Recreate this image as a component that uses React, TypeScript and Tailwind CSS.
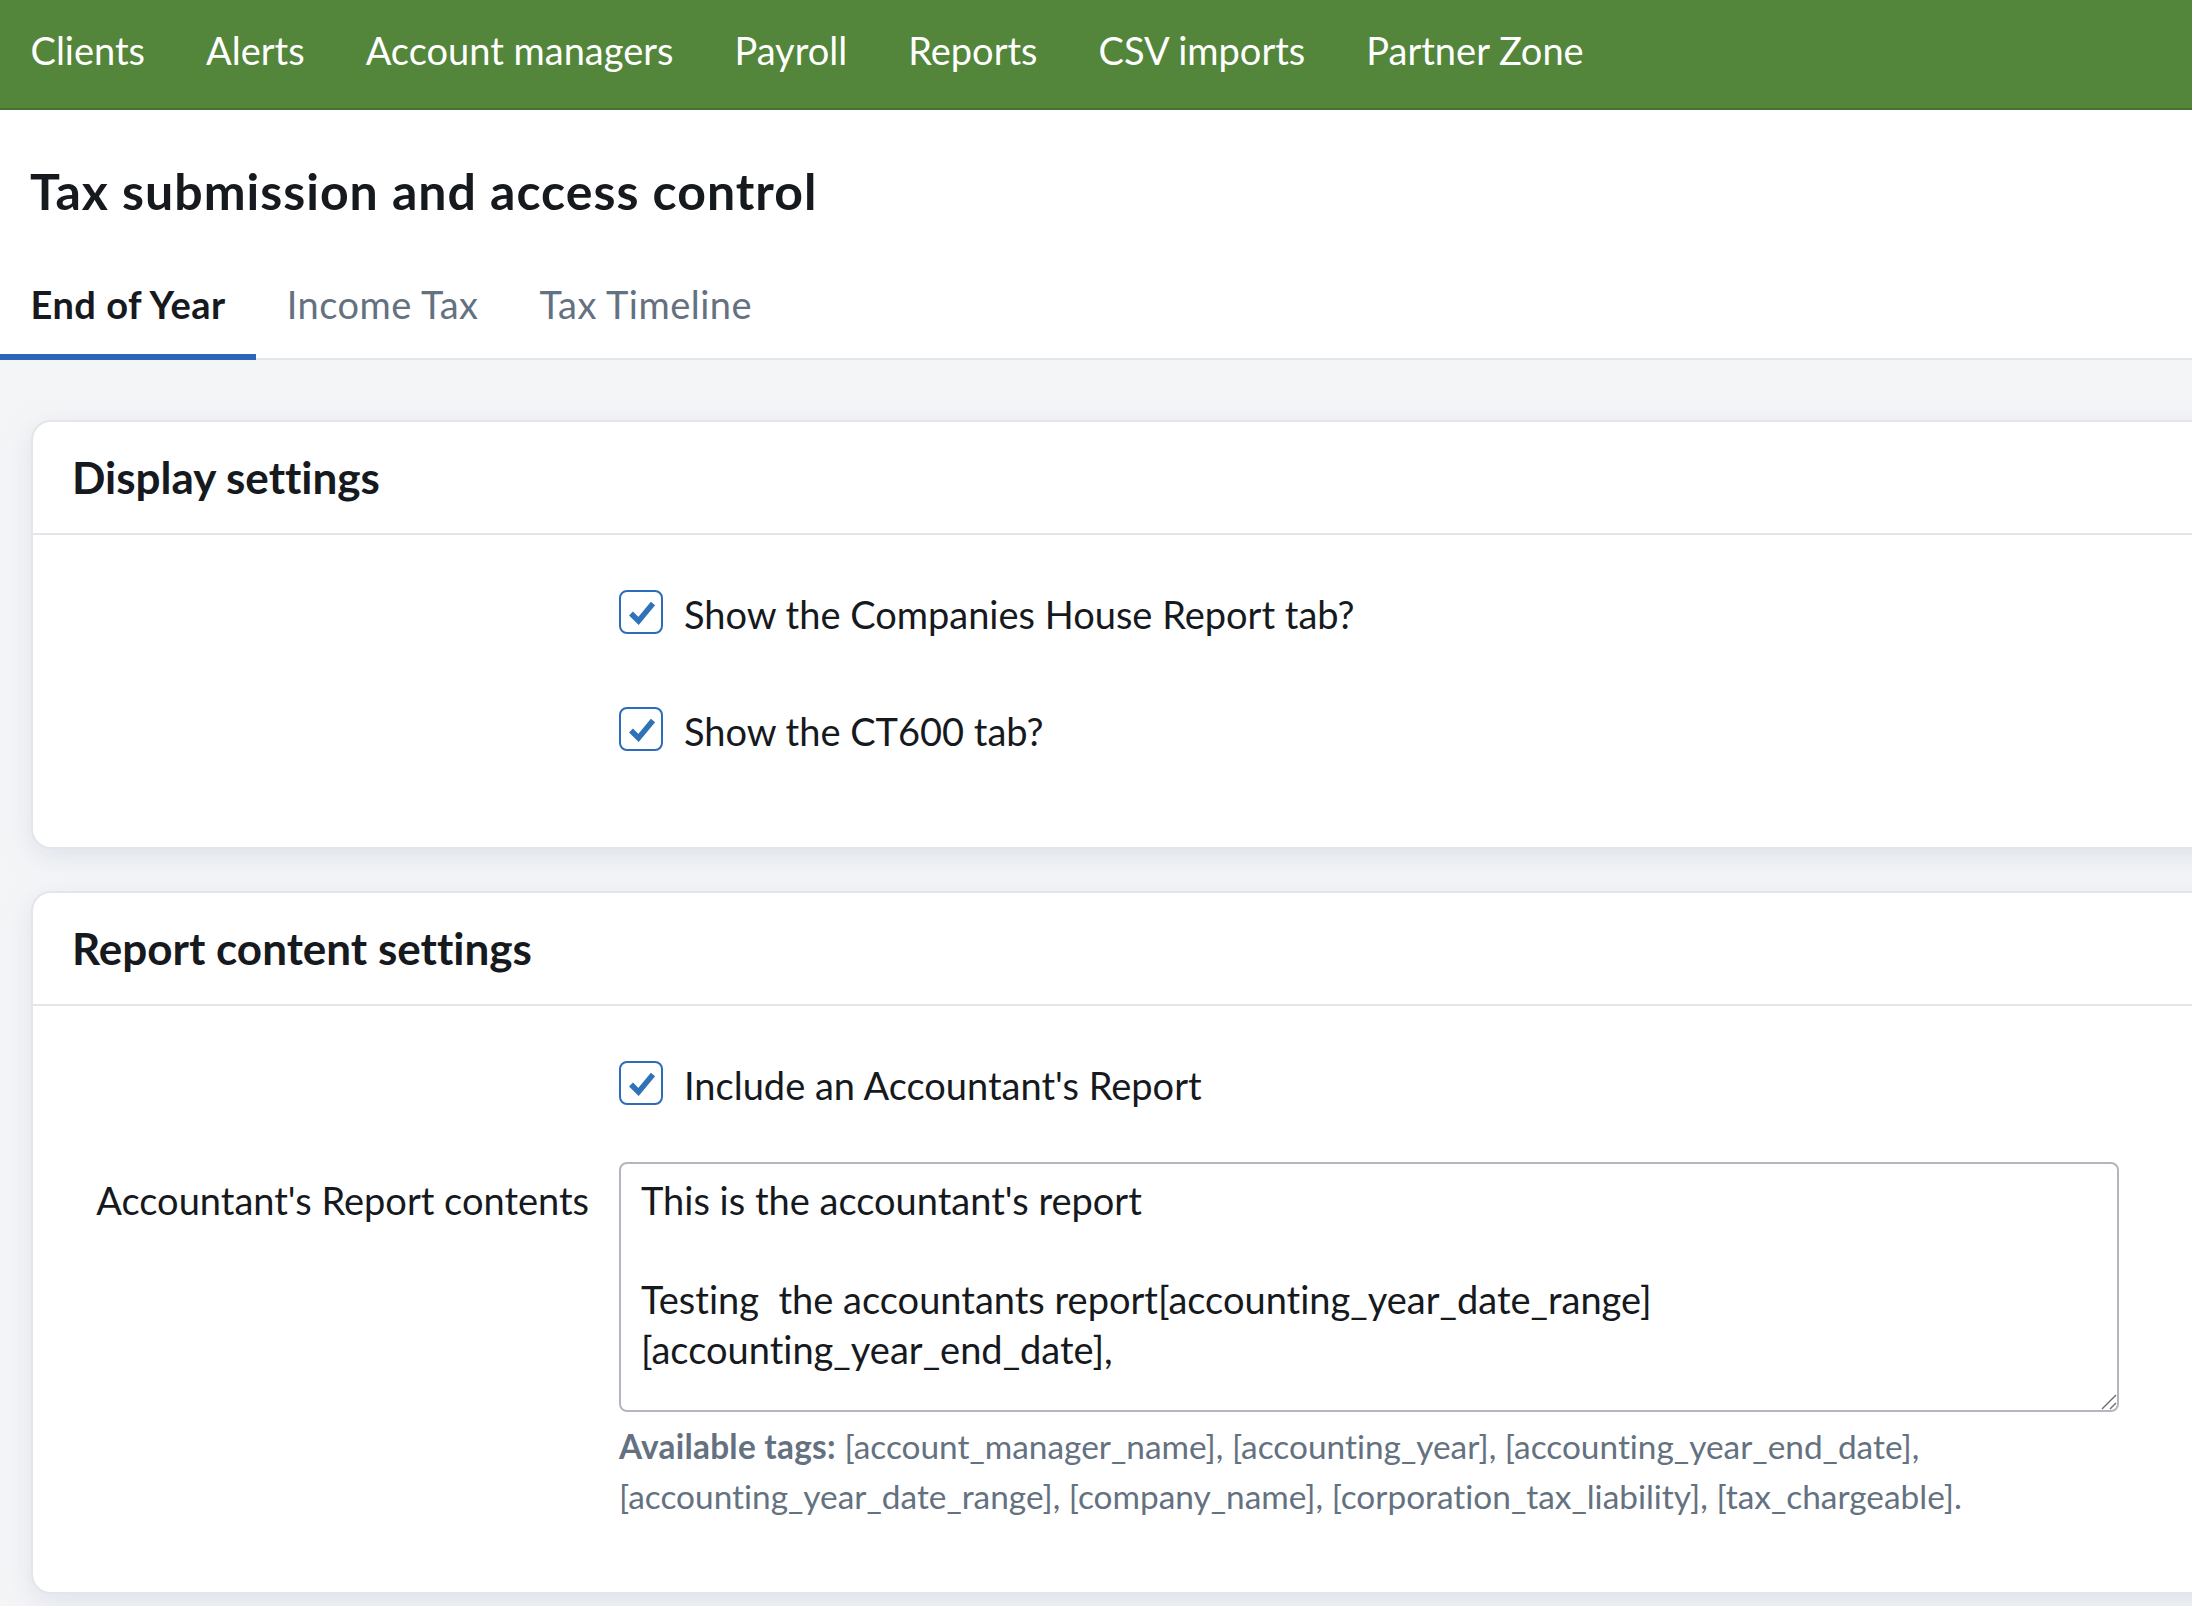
const navLinks = ['Clients', 'Alerts', 'Account managers', 'Payroll', 'Reports', 'CSV imports', 'Partner Zone'];
const tabs = ['End of Year', 'Income Tax', 'Tax Timeline'];

function CheckRow({ label, className }: { label: string; className?: string }) {
  return (
    <div className={`ml-[586px] flex items-center gap-[21px] ${className ?? ''}`}>
      <span className="flex h-[44px] w-[44px] shrink-0 items-center justify-center rounded-[8px] border-2 border-[#2d6cba] bg-white">
        <svg viewBox="0 0 40 40" className="h-[40px] w-[40px]" fill="none">
          <path d="M10 21.5 L17.5 29 L32 11.5" stroke="#2f72b8" strokeWidth="5.5" />
        </svg>
      </span>
      <span className="pt-[4px] text-[38px] leading-[50px] text-[#16191d]">{label}</span>
    </div>
  );
}

function Card({ title, className, children }: { title: string; className?: string; children: React.ReactNode }) {
  return (
    <section className={`ml-[31px] mr-[-60px] rounded-[20px] border-2 border-[#e3e5ea] bg-white shadow-[0_8px_26px_rgba(190,200,215,0.4)] ${className ?? ''}`}>
      <div className="flex h-[113px] items-center border-b-2 border-[#e3e5ea] pb-[2px] pl-[39px]">
        <h2 className="text-[44px] font-bold text-[#16191d]">{title}</h2>
      </div>
      {children}
    </section>
  );
}

export default function App() {
  return (
    <div className="h-[1606px] w-[2192px] overflow-hidden bg-[#f4f5f7] font-['Lato',sans-serif] [font-variant-ligatures:none]">
      <nav className="flex h-[110px] items-center border-b-2 border-[#476f30] bg-[#53853a]">
        {navLinks.map((link) => (
          <a key={link} className="px-[30.5px] pb-[8px] text-[38px] text-white">{link}</a>
        ))}
      </nav>

      <header className="bg-white">
        <h1 className="pl-[30px] pt-[50px] text-[50px] font-bold leading-[62px] tracking-[1px] text-[#16191d]">Tax submission and access control</h1>
        <div className="mt-[40px] flex h-[98px] border-b-2 border-[#e3e5ea]">
          {tabs.map((tab, i) => (
            <a
              key={tab}
              className={
                i === 0
                  ? 'mb-[-2px] border-b-[6px] border-[#2d66b8] px-[30.5px] pt-[14px] text-[38px] font-bold tracking-[0.5px] text-[#16191d]'
                  : 'px-[30.5px] pt-[14px] text-[38px] tracking-[0.5px] text-[#647180]'
              }
            >
              {tab}
            </a>
          ))}
        </div>
      </header>

      <main className="pt-[60px]">
        <Card title="Display settings" className="h-[429px]">
          <CheckRow label="Show the Companies House Report tab?" className="pt-[50px]" />
          <CheckRow label="Show the CT600 tab?" className="pt-[63px]" />
        </Card>

        <Card title="Report content settings" className="mt-[42px] h-[703px]">
          <CheckRow label="Include an Accountant's Report" className="pt-[50px]" />
          <div className="mt-[52px] flex gap-[30px]">
            <label className="w-[556px] shrink-0 pt-[13px] text-right text-[38px] leading-[50px] text-[#16191d]">Accountant's Report contents</label>
            <div className="w-[1500px]">
              <div className="relative">
                <textarea
                  readOnly
                  className="block h-[250px] w-full resize-none rounded-[8px] border-2 border-[#b1b7bd] px-[20px] py-[12px] text-[38px] leading-[49.5px] text-[#16191d] outline-none"
                  defaultValue={"This is the accountant's report\n\nTesting  the accountants report[accounting_year_date_range]\n[accounting_year_end_date],"}
                />
                <svg viewBox="0 0 20 20" className="pointer-events-none absolute bottom-0 right-0 h-[20px] w-[20px]" fill="none" stroke="#6b6b6b" strokeWidth="1.4">
                  <path d="M3 17 L17 3 M11 17 L17 11" />
                </svg>
              </div>
              <p className="mt-[9px] text-[33.4px] leading-[50px] text-[#647180]">
                <strong className="font-bold tracking-[0.25px]">Available tags:</strong> [account_manager_name], [accounting_year], [accounting_year_end_date],<br />
                [accounting_year_date_range], [company_name], [corporation_tax_liability], [tax_chargeable].
              </p>
            </div>
          </div>
        </Card>
      </main>
    </div>
  );
}
